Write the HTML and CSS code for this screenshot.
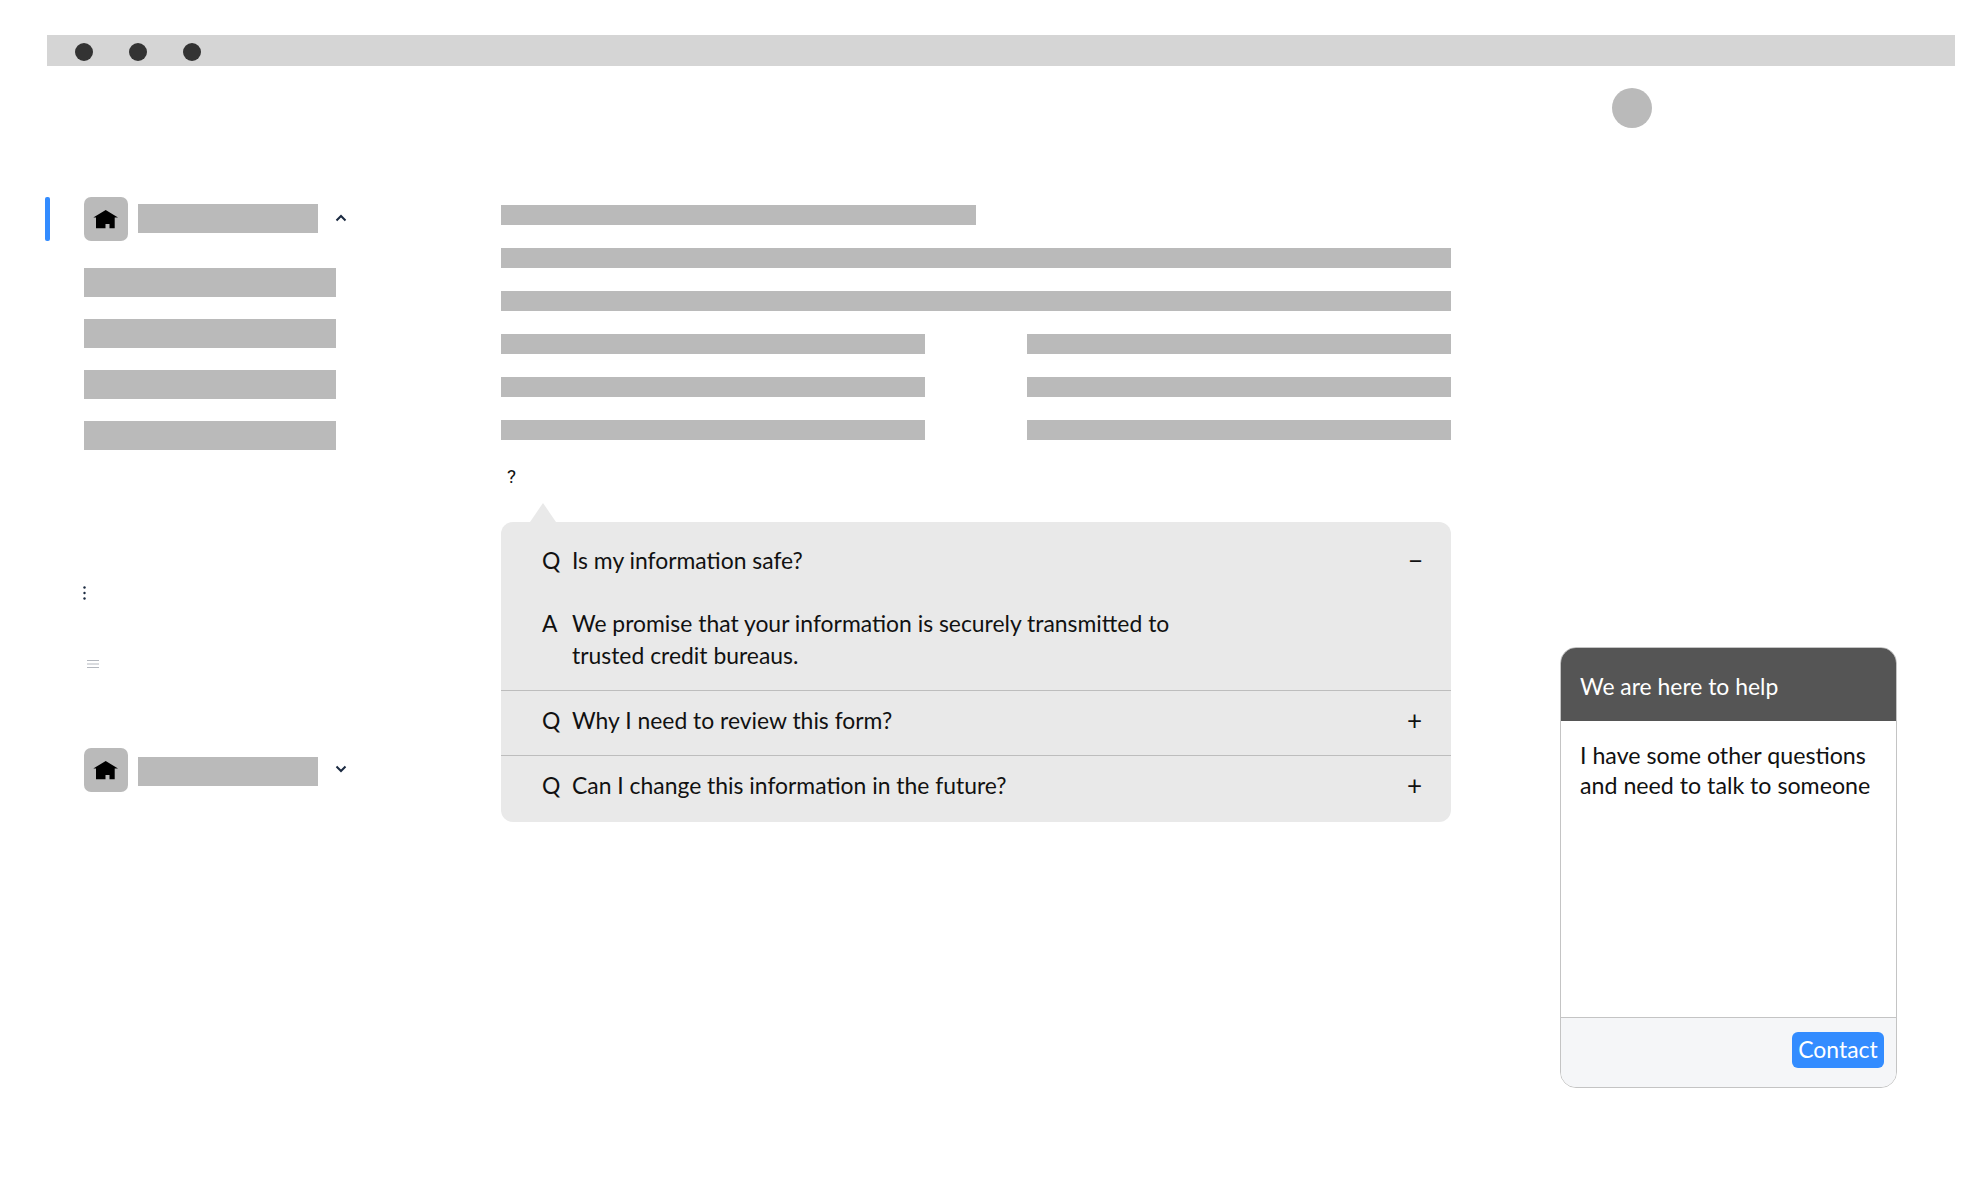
FILE: index.html
```html
<!DOCTYPE html>
<html lang="en">
<head>
    <meta charset="UTF-8">
    <title>Help</title>
    <link rel="stylesheet" href="styles.css">
</head>
<body>
    <div class="topbar">
        <span class="dot"></span>
        <span class="dot"></span>
        <span class="dot"></span>
    </div>
    <div class="layout">
        <div class="sidebar">
            <div class="nav-head">
                <span class="accent"></span>
                <span class="icon-box">
                    <svg width="26" height="20" viewBox="0 0 26 20"><path d="M12.700 1L25 8.500H21.700V19.300H16.500V15H12.500V19.300H3V8.500H.3Z" fill="#000"/></svg>
                </span>
                <span class="nav-bar"></span>
                <svg class="chevron" width="12" height="8" viewBox="0 0 12 8"><path d="M1.500 6.500L6 2L10.500 6.500" fill="none" stroke="#1b2a41" stroke-width="2"/></svg>
            </div>
            <div class="nav-items">
                <div class="nav-item"></div>
                <div class="nav-item"></div>
                <div class="nav-item"></div>
                <div class="nav-item"></div>
            </div>
            <svg class="more" width="3" height="14" viewBox="0 0 3 14"><circle cx="1.500" cy="1.500" r="1.200" fill="#1b2a41"/><circle cx="1.500" cy="7" r="1.200" fill="#1b2a41"/><circle cx="1.500" cy="12.500" r="1.200" fill="#1b2a41"/></svg>
            <svg class="menu" width="12" height="8" viewBox="0 0 12 8"><path d="M0 .5H12M0 4H12M0 7.500H12" stroke="#b4b8bf" stroke-width="1"/></svg>
            <div class="nav-head nav-head-last">
                <span class="accent accent-off"></span>
                <span class="icon-box">
                    <svg width="26" height="20" viewBox="0 0 26 20"><path d="M12.700 1L25 8.500H21.700V19.300H16.500V15H12.500V19.300H3V8.500H.3Z" fill="#000"/></svg>
                </span>
                <span class="nav-bar"></span>
                <svg class="chevron" width="12" height="8" viewBox="0 0 12 8"><path d="M1.500 1.500L6 6L10.500 1.500" fill="none" stroke="#1b2a41" stroke-width="2"/></svg>
            </div>
        </div>

        <div class="main">
            <div class="line line-short"></div>
            <div class="line"></div>
            <div class="line"></div>
            <div class="line-pair"><div class="line"></div><div class="line"></div></div>
            <div class="line-pair"><div class="line"></div><div class="line"></div></div>
            <div class="line-pair"><div class="line"></div><div class="line"></div></div>
            <div class="help-mark">?</div>
            <div class="faq">
                <div class="faq-item faq-open">
                    <div class="faq-row">
                        <span class="faq-tag">Q</span>
                        <span class="faq-text">Is my information safe?</span>
                        <span class="faq-toggle faq-minus">&minus;</span>
                    </div>
                    <div class="faq-row faq-answer">
                        <span class="faq-tag">A</span>
                        <span class="faq-text">We promise that your information is securely transmitted to<br>trusted credit bureaus.</span>
                    </div>
                </div>
                <div class="faq-item">
                    <div class="faq-row">
                        <span class="faq-tag">Q</span>
                        <span class="faq-text">Why I need to review this form?</span>
                        <span class="faq-toggle">+</span>
                    </div>
                </div>
                <div class="faq-item">
                    <div class="faq-row">
                        <span class="faq-tag">Q</span>
                        <span class="faq-text">Can I change this information in the future?</span>
                        <span class="faq-toggle">+</span>
                    </div>
                </div>
            </div>
        </div>

        <div class="side">
            <div class="avatar"></div>
            <div class="chat">
                <div class="chat-head">We are here to help</div>
                <div class="chat-body">I have some other questions<br>and need to talk to someone</div>
                <div class="chat-foot"><button class="contact">Contact</button></div>
            </div>
        </div>
    </div>
</body>
</html>
```

FILE: styles.css
```css
body {
    margin: 0;
    background: #fff;
    font-family: 'Lato', sans-serif;
    color: #111;
}

.topbar {
    display: flex;
    align-items: center;
    gap: 36px;
    height: 31px;
    margin: 35px 25px 0 47px;
    padding-left: 28px;
    background: #d5d5d5;
}

.dot {
    width: 18px;
    height: 18px;
    margin-top: 2px;
    border-radius: 50%;
    background: #333;
}

.layout {
    display: flex;
    padding: 22px 0 0 45px;
}

.sidebar {
    display: flex;
    flex-direction: column;
    width: 456px;
    margin-top: 109px;
}

.nav-head {
    display: flex;
    align-items: center;
    height: 44px;
}

.accent {
    width: 5px;
    height: 44px;
    margin-right: 34px;
    border-radius: 2px;
    background: #338cff;
}

.accent-off {
    background: none;
}

.icon-box {
    display: flex;
    align-items: center;
    justify-content: center;
    width: 44px;
    height: 44px;
    border-radius: 7px;
    background: #bababa;
}

.nav-bar {
    width: 180px;
    height: 29px;
    margin-left: 10px;
    margin-bottom: 1px;
    background: #bababa;
}

.nav-head-last .nav-bar {
    margin-top: 3px;
    margin-bottom: 0;
}

.chevron {
    margin-left: 17px;
    margin-bottom: 2px;
}

.nav-items {
    display: flex;
    flex-direction: column;
    gap: 22px;
    margin: 27px 0 0 39px;
}

.nav-item {
    width: 252px;
    height: 29px;
    background: #bababa;
}

.more {
    margin: 136px 0 0 38px;
}

.menu {
    margin: 60px 0 0 42px;
}

.nav-head-last {
    margin-top: 80px;
}

.main {
    width: 950px;
    margin-top: 117px;
    margin-right: 109px;
}

.line {
    height: 20px;
    margin-bottom: 23px;
    background: #bababa;
}

.line-short {
    width: 475px;
}

.line-pair {
    display: flex;
    justify-content: space-between;
}

.line-pair .line {
    width: 424px;
}

.help-mark {
    margin: 4px 0 0 6px;
    font-family: 'Roboto', sans-serif;
    font-size: 19px;
    line-height: 20px;
}

.faq {
    position: relative;
    margin-top: 35px;
    border-radius: 12px;
    background: #e9e9e9;
}

/* little arrow pointing up at the question mark */
.faq::before {
    content: "";
    position: absolute;
    left: 29px;
    top: -19px;
    border-left: 13px solid transparent;
    border-right: 13px solid transparent;
    border-bottom: 19px solid #e9e9e9;
}

.faq-item {
    height: 64px;
    border-top: 1px solid #bdbdbd;
}

.faq-item:first-child {
    border-top: none;
}

.faq-open {
    height: 168px;
}

.faq-item:last-child {
    height: 66px;
}

.faq-row {
    display: flex;
    align-items: center;
    height: 58px;
    padding: 0 29px 0 41px;
    font-size: 22.900px;
}

.faq-open .faq-row {
    height: 76px;
}

.faq-tag {
    width: 30px;
    flex-shrink: 0;
    line-height: 32px;
}

.faq-text {
    flex: 1;
    line-height: 32px;
}

.faq-open .faq-answer {
    align-items: flex-start;
    height: auto;
    padding-top: 9px;
}

.faq-toggle {
    font-size: 26px;
    line-height: 1;
}

.faq-minus {
    margin-right: -1px;
}

.side {
    width: 337px;
}

.avatar {
    width: 40px;
    height: 40px;
    margin-left: 52px;
    border-radius: 50%;
    background: #bababa;
}

.chat {
    display: flex;
    flex-direction: column;
    height: 441px;
    margin-top: 519px;
    box-sizing: border-box;
    border: 1px solid #c4c4c4;
    border-radius: 16px;
    overflow: hidden;
    background: #fff;
}

.chat-head {
    height: 74px;
    padding: 24px 20px 0;
    box-sizing: border-box;
    margin: -1px -1px 0;
    background: #555;
    color: #fff;
    font-size: 22.900px;
    line-height: 30px;
}

.chat-body {
    flex: 1;
    padding: 19px 19px 0;
    font-size: 23.200px;
    line-height: 30px;
}

.chat-foot {
    display: flex;
    justify-content: flex-end;
    height: 70px;
    padding: 14px 12px 0 0;
    box-sizing: border-box;
    border-top: 1px solid #c4c4c4;
    background: #f5f6f8;
}

.contact {
    width: 92px;
    height: 36px;
    padding: 0 0 3px;
    border: none;
    border-radius: 6px;
    background: #338cff;
    color: #fff;
    font-family: 'Lato', sans-serif;
    font-size: 22.900px;
}
```
